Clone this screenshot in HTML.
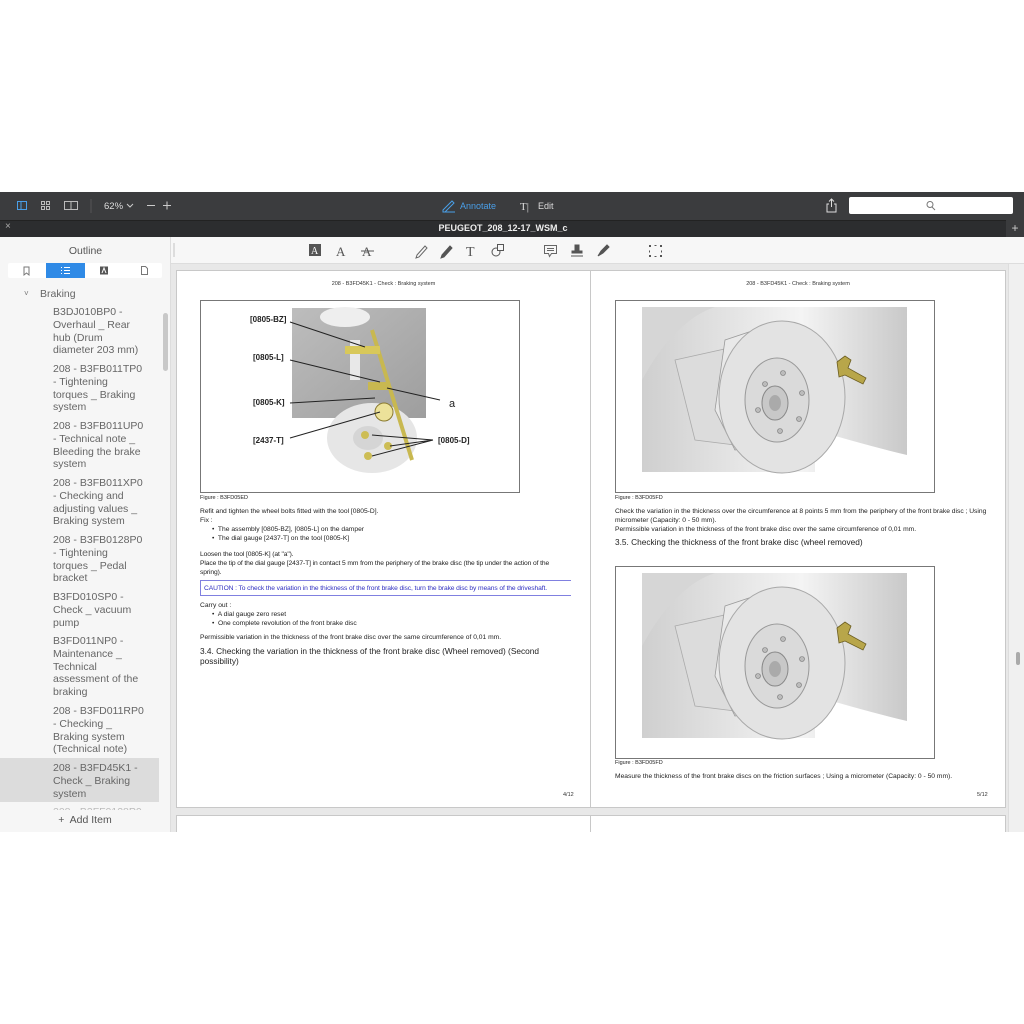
<!DOCTYPE html>
<html><head><meta charset="utf-8"><style>
*{margin:0;padding:0;box-sizing:border-box}
body{width:1024px;height:1024px;background:#fff;font-family:"Liberation Sans",sans-serif;position:relative;overflow:hidden}
.abs{position:absolute}
.tb{left:0;top:192px;width:1024px;height:28px;background:#3b3c3e}
.tab{left:0;top:220px;width:1024px;height:17px;background:#2c2d2f;border-top:1px solid #222}
.side{left:0;top:237px;width:171px;height:595px;background:#f6f6f6;border-right:1px solid #ddd}
.ctb{left:171px;top:237px;width:853px;height:27px;background:#f7f7f7;border-bottom:1px solid #ddd}
.area{left:171px;top:264px;width:853px;height:568px;background:#e8e8e8}
.page{background:#fff;border:1px solid #c8c8c8}
.pt{font-size:6.7px;color:#222;line-height:9px;white-space:nowrap}
.hd{font-size:5.5px;color:#333;text-align:center}
.out{position:absolute;left:53px;font-size:10.5px;color:#666;line-height:12.8px}
.lab{font-size:8px;font-weight:bold;fill:#222;font-family:"Liberation Sans",sans-serif}
</style></head><body>
<div class="abs tb"></div>
<svg class="abs" style="left:0;top:192px" width="1024" height="28">
<g fill="none" stroke="#4a9fe8" stroke-width="1"><rect x="17.5" y="9.5" width="9" height="8"/><line x1="21" y1="9.5" x2="21" y2="17.5"/></g>
<g fill="none" stroke="#bbb" stroke-width="1"><rect x="41.5" y="9.5" width="3" height="3"/><rect x="46.5" y="9.5" width="3" height="3"/><rect x="41.5" y="14.5" width="3" height="3"/><rect x="46.5" y="14.5" width="3" height="3"/>
<rect x="64.5" y="9.5" width="13" height="8"/><line x1="71" y1="9.5" x2="71" y2="17.5"/></g>
<line x1="91" y1="7" x2="91" y2="21" stroke="#555"/>
<text x="104" y="17" fill="#ddd" font-size="9.5" font-family="Liberation Sans">62%</text>
<path d="M127 12l3 3 3-3" stroke="#ccc" fill="none"/>
<path d="M147 13.5h8M163 13.5h8M167 9.5v8" stroke="#ccc" fill="none"/>
<path d="M443 18l9-9 2 2-9 9h-2z" stroke="#4a9fe8" fill="none"/><line x1="443" y1="20" x2="455" y2="20" stroke="#4a9fe8"/>
<text x="460" y="17" fill="#4a9fe8" font-size="9" font-family="Liberation Sans">Annotate</text>
<text x="520" y="18" fill="#ddd" font-size="11" font-family="Liberation Serif">T|</text>
<text x="538" y="17" fill="#ddd" font-size="9" font-family="Liberation Sans">Edit</text>
<path d="M829 12h-2v8h9v-8h-2M831.5 15v-8M829 9.5l2.5-2.5 2.5 2.5" stroke="#ddd" fill="none"/>
<rect x="849" y="5" width="164" height="17" rx="2" fill="#fff"/>
<circle cx="930" cy="12.5" r="3" stroke="#777" fill="none"/><line x1="932" y1="15" x2="935" y2="18" stroke="#777"/>
</svg>
<div class="abs tab"></div>
<div class="abs" style="left:5px;top:221px;font-size:10px;color:#aaa">×</div>
<div class="abs" style="left:0;top:223px;width:1006px;text-align:center;font-size:9px;font-weight:bold;color:#eee">PEUGEOT_208_12-17_WSM_c</div>
<div class="abs" style="left:1006px;top:220px;width:18px;height:17px;background:#3a3b3d;color:#ccc;font-size:12px;text-align:center;line-height:16px">+</div>

<div class="abs side"></div>
<div class="abs" style="left:0;top:245px;width:171px;text-align:center;font-size:10.5px;color:#555">Outline</div>
<div class="abs" style="left:8px;top:263px;width:154px;height:15px;background:#fff;border-radius:2px"></div>
<div class="abs" style="left:46px;top:263px;width:39px;height:15px;background:#2f8ae6"></div>
<svg class="abs" style="left:8px;top:263px" width="154" height="15">
<path d="M16 4h5v8l-2.5-2-2.5 2z" stroke="#777" fill="none"/>
<path d="M53 4.5h1M56 4.5h6M53 7.5h1M56 7.5h6M53 10.5h1M56 10.5h6" stroke="#fff"/>
<rect x="92" y="3.5" width="8" height="8" fill="#555"/><path d="M94 10l2-5 2 5" stroke="#fff" fill="none"/>
<path d="M133.5 3.5h4l2 2v6h-6z" stroke="#777" fill="none"/>
</svg>
<div class="abs" style="left:24px;top:289px;font-size:8px;color:#777">˅</div>
<div class="abs" style="left:40px;top:288px;font-size:10.5px;color:#666">Braking</div>
<div class="abs" style="left:163px;top:313px;width:5px;height:58px;background:#c8c8c8;border-radius:3px"></div>
<div class="abs" style="left:0;top:758px;width:159px;height:44px;background:#dcdcdc"></div>
<div class="out" style="top:306px">B3DJ010BP0 -<br>Overhaul _ Rear<br>hub (Drum<br>diameter 203 mm)</div>
<div class="out" style="top:363px">208 - B3FB011TP0<br>- Tightening<br>torques _ Braking<br>system</div>
<div class="out" style="top:420px">208 - B3FB011UP0<br>- Technical note _<br>Bleeding the brake<br>system</div>
<div class="out" style="top:477px">208 - B3FB011XP0<br>- Checking and<br>adjusting values _<br>Braking system</div>
<div class="out" style="top:534px">208 - B3FB0128P0<br>- Tightening<br>torques _ Pedal<br>bracket</div>
<div class="out" style="top:591px">B3FD010SP0 -<br>Check _ vacuum<br>pump</div>
<div class="out" style="top:635px">B3FD011NP0 -<br>Maintenance _<br>Technical<br>assessment of the<br>braking</div>
<div class="out" style="top:705px">208 - B3FD011RP0<br>- Checking _<br>Braking system<br>(Technical note)</div>
<div class="out" style="top:762px">208 - B3FD45K1 -<br>Check _ Braking<br>system</div>
<div class="out" style="top:806px;height:5px;overflow:hidden;color:#bbb">208 - B3FF0128P0</div>
<div class="abs" style="left:0;top:810px;width:170px;height:21px;background:#f6f6f6;text-align:center;font-size:10.5px;color:#555;line-height:20px">+&nbsp; Add Item</div>

<div class="abs ctb"></div>
<div class="abs" style="left:173px;top:243px;width:2px;height:14px;background:#ddd"></div>
<svg class="abs" style="left:171px;top:237px" width="853" height="27">
<g fill="#555" font-family="Liberation Serif" font-size="13">
<rect x="138" y="7" width="12" height="12" fill="#555"/><text x="140" y="17" fill="#fff" font-size="10">A</text>
<text x="165" y="19">A</text><text x="191" y="19">A</text><line x1="190" y1="14" x2="203" y2="14" stroke="#555"/>
<text x="295" y="19" font-size="14">T</text></g>
<path d="M246 18l8-9 2 2-8 9-3 1z" stroke="#666" fill="none"/>
<path d="M271 18l8-9 2 2-8 9-3 1z" stroke="#555" fill="#555"/>
<circle cx="325" cy="15" r="4" stroke="#555" fill="none"/><rect x="326.5" y="7.5" width="6" height="6" stroke="#555" fill="#f7f7f7"/>
<path d="M373.5 8.5h12v8h-5l-2 3-1-3h-4z M376 11.5h7M376 13.5h7" stroke="#666" fill="none"/>
<path d="M404 8h4v6h3v2h-10v-2h3zM400 19h12" stroke="#555" fill="#555"/>
<path d="M427 19l3-5 6-6 2 2-6 6z" stroke="#555" fill="#555"/>
<g fill="#555"><rect x="478" y="8" width="2" height="2"/><rect x="489" y="8" width="2" height="2"/><rect x="478" y="18" width="2" height="2"/><rect x="489" y="18" width="2" height="2"/><rect x="483.5" y="8" width="2" height="1"/><rect x="483.5" y="19" width="2" height="1"/><rect x="478" y="13.5" width="1" height="2"/><rect x="490" y="13.5" width="1" height="2"/></g>
</svg>

<div class="abs area"></div>
<div class="abs" style="left:1008px;top:264px;width:16px;height:568px;background:#f0f0f0;border-left:1px solid #ddd"></div>
<div class="abs" style="left:1016px;top:652px;width:4px;height:13px;background:#aaa;border-radius:2px"></div>
<div class="abs page" style="left:176px;top:270px;width:415px;height:538px"></div>
<div class="abs page" style="left:590px;top:270px;width:416px;height:538px"></div>
<div class="abs page" style="left:176px;top:815px;width:415px;height:17px;border-bottom:none"></div>
<div class="abs page" style="left:590px;top:815px;width:416px;height:17px;border-bottom:none"></div>

<div class="abs hd" style="left:176px;top:281px;width:415px">208 - B3FD45K1 - Check : Braking system</div>
<div class="abs" style="left:200px;top:300px;width:320px;height:193px;border:1px solid #777"></div>
<svg class="abs" style="left:200px;top:300px" width="320" height="193">
<defs><linearGradient id="g1" x1="0" y1="0" x2="1" y2="1"><stop offset="0" stop-color="#bdbdbd"/><stop offset="1" stop-color="#9e9e9e"/></linearGradient></defs>
<rect x="92" y="8" width="134" height="110" fill="url(#g1)"/>
<ellipse cx="145" cy="17" rx="25" ry="10" fill="#eee"/>
<rect x="150" y="40" width="10" height="40" fill="#e8e8e8"/>
<ellipse cx="172" cy="138" rx="45" ry="35" fill="#e6e6e6"/>
<ellipse cx="168" cy="138" rx="15" ry="12" fill="#d5d5d5"/>
<line x1="172" y1="30" x2="212" y2="160" stroke="#c8b850" stroke-width="4"/>
<rect x="145" y="46" width="35" height="8" fill="#d8c85a"/>
<rect x="168" y="82" width="22" height="8" fill="#c8b850"/>
<circle cx="184" cy="112" r="9" fill="#ece29a" stroke="#8a7a30"/>
<circle cx="165" cy="135" r="4" fill="#cdbd55"/><circle cx="188" cy="146" r="4" fill="#cdbd55"/><circle cx="168" cy="156" r="4" fill="#cdbd55"/>
<g stroke="#222" stroke-width="1" fill="none">
<path d="M90 22L165 47M90 60L180 82M90 103L175 98M90 138L180 112M187 88L240 100M172 135L233 140M190 146L233 140M172 156L233 140"/></g>
<text class="lab" x="50" y="22">[0805-BZ]</text>
<text class="lab" x="53" y="60">[0805-L]</text>
<text class="lab" x="53" y="105">[0805-K]</text>
<text class="lab" x="53" y="143">[2437-T]</text>
<text class="lab" x="238" y="143">[0805-D]</text>
<text x="249" y="107" font-size="11" fill="#222" font-family="Liberation Sans">a</text>
</svg>
<div class="abs pt" style="left:200px;top:494px;font-size:5.5px">Figure : B3FD05ED</div>
<div class="abs pt" style="left:200px;top:507px">Refit and tighten the wheel bolts fitted with the tool [0805-D].<br>Fix :</div>
<div class="abs pt" style="left:212px;top:525px">•&nbsp; The assembly [0805-BZ], [0805-L] on the damper<br>•&nbsp; The dial gauge [2437-T] on the tool [0805-K]</div>
<div class="abs pt" style="left:200px;top:550px;letter-spacing:-0.1px">Loosen the tool [0805-K] (at "a").<br>Place the tip of the dial gauge [2437-T] in contact 5 mm from the periphery of the brake disc (the tip under the action of the<br>spring).</div>
<div class="abs pt" style="left:200px;top:580px;width:371px;height:16px;border-top:1px solid #8080e0;border-bottom:1px solid #8080e0;border-left:1px solid #8080e0;color:#3030c0;padding:3px 0 0 3px;letter-spacing:-0.1px">CAUTION : To check the variation in the thickness of the front brake disc, turn the brake disc by means of the driveshaft.</div>
<div class="abs pt" style="left:200px;top:601px">Carry out :</div>
<div class="abs pt" style="left:212px;top:610px">•&nbsp; A dial gauge zero reset<br>•&nbsp; One complete revolution of the front brake disc</div>
<div class="abs pt" style="left:200px;top:633px">Permissible variation in the thickness of the front brake disc over the same circumference of 0,01 mm.</div>
<div class="abs" style="left:200px;top:646px;font-size:8.3px;color:#222;line-height:10px">3.4. Checking the variation in the thickness of the front brake disc (Wheel removed) (Second<br>possibility)</div>
<div class="abs" style="left:563px;top:792px;font-size:5.5px;color:#333">4/12</div>

<div class="abs hd" style="left:590px;top:281px;width:416px">208 - B3FD45K1 - Check : Braking system</div>
<svg width="0" height="0" style="position:absolute"><defs>
<linearGradient id="bg2" x1="0" y1="0" x2="1" y2="0"><stop offset="0" stop-color="#cfcfcf"/><stop offset=".6" stop-color="#f4f4f4"/><stop offset="1" stop-color="#c9c9c9"/></linearGradient>
<g id="disc">
<rect x="27" y="7" width="265" height="165" fill="url(#bg2)"/>
<path d="M27 172L27 80Q60 20 100 7L27 7z" fill="#d6d6d6"/>
<path d="M200 130Q250 145 292 155L292 172L200 172z" fill="#fff"/>
<path d="M60 60L150 40L160 150L80 140z" fill="#dcdcdc" stroke="#aaa" stroke-width=".8"/>
<path d="M110 40L140 30L165 60L160 140L120 150L100 110z" fill="#e9e9e9" stroke="#999" stroke-width=".8"/>
<ellipse cx="167" cy="97" rx="63" ry="76" fill="#e3e3e3" stroke="#a8a8a8"/>
<ellipse cx="162" cy="100" rx="32" ry="42" fill="#dadada" stroke="#999"/>
<ellipse cx="160" cy="103" rx="13" ry="17" fill="#c8c8c8" stroke="#888"/>
<ellipse cx="160" cy="103" rx="6" ry="8" fill="#aaa"/>
<g fill="#bbb" stroke="#777" stroke-width=".6"><circle cx="168" cy="73" r="2.5"/><circle cx="187" cy="93" r="2.5"/><circle cx="184" cy="119" r="2.5"/><circle cx="165" cy="131" r="2.5"/><circle cx="143" cy="110" r="2.5"/><circle cx="150" cy="84" r="2.5"/></g>
<path d="M222 62l8-6 6 4-3 8 18 10-3 6-18-9-6 2z" fill="#b8a64a" stroke="#6b5d20" stroke-width=".8"/>
</g></defs></svg>
<div class="abs" style="left:615px;top:300px;width:320px;height:193px;border:1px solid #777"></div>
<svg class="abs" style="left:615px;top:300px" width="320" height="193"><use href="#disc"/></svg>
<div class="abs pt" style="left:615px;top:494px;font-size:5.5px">Figure : B3FD05FD</div>
<div class="abs pt" style="left:615px;top:507px;width:372px;overflow:hidden">Check the variation in the thickness over the circumference at 8 points 5 mm from the periphery of the front brake disc ; Using a</div>
<div class="abs pt" style="left:615px;top:516px">micrometer (Capacity: 0 - 50 mm).<br>Permissible variation in the thickness of the front brake disc over the same circumference of 0,01 mm.</div>
<div class="abs" style="left:615px;top:537px;font-size:8.3px;color:#222">3.5. Checking the thickness of the front brake disc (wheel removed)</div>
<div class="abs" style="left:615px;top:566px;width:320px;height:193px;border:1px solid #777"></div>
<svg class="abs" style="left:615px;top:566px" width="320" height="193"><use href="#disc"/></svg>
<div class="abs pt" style="left:615px;top:759px;font-size:5.5px">Figure : B3FD05FD</div>
<div class="abs pt" style="left:615px;top:772px">Measure the thickness of the front brake discs on the friction surfaces ; Using a micrometer (Capacity: 0 - 50 mm).</div>
<div class="abs" style="left:977px;top:792px;font-size:5.5px;color:#333">5/12</div>
</body></html>
